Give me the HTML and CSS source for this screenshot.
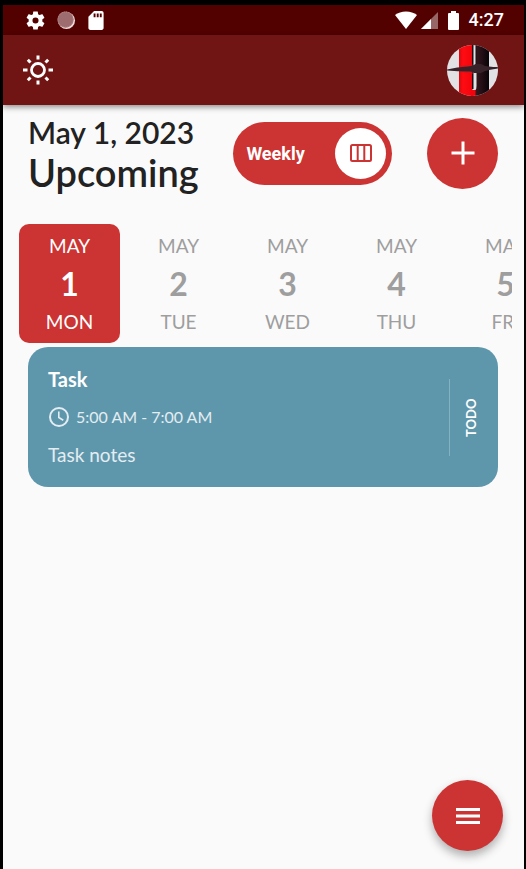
FILE: index.html
```html
<!DOCTYPE html>
<html lang="en">
<head>
<meta charset="utf-8">
<meta name="viewport" content="width=device-width, initial-scale=1">
<title>Upcoming</title>
<link rel="stylesheet" href="styles.css">
</head>
<body>
<div class="screen">
  <div class="status">
    <div class="status-group">
      <svg class="gear" viewBox="2 2 20 20" aria-hidden="true"><path fill="#fff" d="M19.14 12.94c.04-.3.06-.61.06-.94s-.02-.64-.07-.94l2.03-1.58c.18-.14.23-.41.12-.61l-1.92-3.32c-.12-.22-.37-.29-.59-.22l-2.39.96c-.5-.38-1.03-.7-1.62-.94l-.36-2.54c-.04-.24-.24-.41-.48-.41h-3.84c-.24 0-.43.17-.47.41l-.36 2.54c-.59.24-1.13.57-1.62.94l-2.39-.96c-.22-.08-.47 0-.59.22L2.74 8.87c-.12.21-.08.47.12.61l2.03 1.58c-.05.3-.09.63-.09.94s.02.64.07.94l-2.03 1.58c-.18.14-.23.41-.12.61l1.92 3.32c.12.22.37.29.59.22l2.39-.96c.5.38 1.03.7 1.62.94l.36 2.54c.05.24.24.41.48.41h3.84c.24 0 .44-.17.47-.41l.36-2.54c.59-.24 1.13-.56 1.62-.94l2.39.96c.22.08.47 0 .59-.22l1.92-3.32c.12-.22.07-.47-.12-.61l-2.01-1.58zM12 15.2a3.2 3.2 0 1 1 0-6.4 3.2 3.2 0 0 1 0 6.4z"/></svg>
      <svg class="dot" viewBox="0 0 20 20" aria-hidden="true"><circle cx="10" cy="10" r="9" fill="#eedcdc"/><circle cx="9" cy="9" r="8.500" fill="#9c6c6e"/><circle cx="9" cy="9" r="8" fill="none" stroke="#b98f90" stroke-width="1" stroke-dasharray="1 1"/></svg>
      <svg class="sd" viewBox="4 2 16 20" aria-hidden="true"><path fill="#fff" fill-rule="evenodd" d="M18 2h-8L4 8v12c0 1.100.9 2 2 2h12c1.100 0 2-.9 2-2V4c0-1.100-.9-2-2-2zM9.500 4.500v4h2v-4zm3.300 0v4h2v-4zm3.200 0v4h2v-4z"/></svg>
    </div>
    <div class="status-group right">
      <svg class="wifi" viewBox="0 0 22 18" aria-hidden="true"><path fill="#fff" d="M11 18 0 4Q4.500.5 11 .5T22 4z"/></svg>
      <svg class="signal" viewBox="0 0 17 17" aria-hidden="true"><path fill="#fff" opacity=".4" d="M0 17 17 0v17z"/><path fill="#fff" d="M0 17 10 7v10z"/></svg>
      <svg class="battery" viewBox="0 0 11 19" aria-hidden="true"><path fill="#fff" d="M3 2V0h5v2h2q1 0 1 1v15q0 1-1 1H1q-1 0-1-1V3q0-1 1-1z"/></svg>
      <span>4:27</span>
    </div>
  </div>

  <header class="appbar">
    <button class="theme" type="button" aria-label="Toggle theme">
      <svg viewBox="0 0 30 30" fill="none" stroke="#fff" aria-hidden="true"><circle cx="15" cy="15" r="6.500" stroke-width="2.800"/><path stroke-width="3" d="M15 .5v4M15 25.500v4M0 15h4.500M25.500 15H30M4.800 4.800l2.700 2.700M22.500 22.500l2.700 2.700M25.200 4.800l-2.700 2.700M7.500 22.500l-2.700 2.700"/></svg>
    </button>
    <a class="avatar" href="#profile" aria-label="Profile">
      <svg viewBox="0 0 51 51" aria-hidden="true">
        <defs><clipPath id="round"><circle cx="25.500" cy="25.500" r="25.500"/></clipPath>
        <linearGradient id="red"><stop offset="0" stop-color="#d80a10"/><stop offset=".3" stop-color="#ff0c12"/><stop offset="1" stop-color="#f2040c"/></linearGradient>
        <linearGradient id="dark"><stop offset="0" stop-color="#38181f"/><stop offset=".6" stop-color="#1c0c12"/><stop offset="1" stop-color="#080407"/></linearGradient></defs>
        <g clip-path="url(#round)">
          <path fill="#e2e2e4" d="M0 0h51v51H0z"/>
          <path fill="url(#red)" d="M12 0h13.500v51H12z"/>
          <path fill="#f2040c" d="M24 45h5v6h-5z"/>
          <path fill="#181014" d="M25 0h1.500v21H25zM28.500 0h1.500v21h-1.500zM25 26h1.500v18H25z"/>
          <path fill="url(#dark)" d="M29.500 0H42v51H28.500v-6q1-1 1-4z"/>
          <path fill="#e01018" d="M12 21.500q7-2 13.500-2v9.500q-7-1-13.500-3z"/>
          <path fill="#38222a" d="M0 24.500Q10 22 21 21.500q5-.5 7.500-2.500H34q4 2.500 8 2.500 4 .5 9 .5v1.500q-5 .8-9 1.500-5 1-8 3h-7q-1-1.500-4-1.500Q10 26.500 0 25.500z"/>
        </g>
      </svg>
    </a>
  </header>

  <main>
    <section class="heading">
      <div>
        <p class="date">May 1, 2023</p>
        <h1>Upcoming</h1>
      </div>
      <button class="toggle" type="button" role="switch" aria-checked="true">
        <span>Weekly</span>
        <span class="knob">
          <svg viewBox="0 0 22 18" fill="none" stroke="#cc3333" stroke-width="2" aria-hidden="true"><rect x="1" y="1" width="20" height="16" rx="1.500"/><path d="M7.700 1v16M14.300 1v16"/></svg>
        </span>
      </button>
      <button class="round" type="button" aria-label="Add task">
        <svg viewBox="0 0 24 24" stroke="#fff" stroke-width="3" aria-hidden="true"><path d="M12 .5v23M.5 12h23"/></svg>
      </button>
    </section>

    <div class="days">
      <button class="day selected" type="button"><span>MAY</span><b>1</b><span>MON</span></button>
      <button class="day" type="button"><span>MAY</span><b>2</b><span>TUE</span></button>
      <button class="day" type="button"><span>MAY</span><b>3</b><span>WED</span></button>
      <button class="day" type="button"><span>MAY</span><b>4</b><span>THU</span></button>
      <button class="day" type="button"><span>MAY</span><b>5</b><span>FRI</span></button>
    </div>

    <article class="task">
      <div class="task-body">
        <h2>Task</h2>
        <p class="time">
          <svg viewBox="0 0 20 20" fill="none" stroke="#e4edf1" stroke-width="2" aria-hidden="true"><circle cx="10" cy="10" r="9"/><path stroke-width="1.600" d="M9.800 4.500v6l4.500 2.700"/></svg>
          5:00 AM - 7:00 AM
        </p>
        <p class="notes">Task notes</p>
      </div>
      <div class="state">TODO</div>
    </article>
  </main>

  <button class="round fab" type="button" aria-label="Open menu">
    <svg viewBox="0 0 24 24" stroke="#fff" stroke-width="2.800" aria-hidden="true"><path d="M0 5.500h24M0 12h24M0 18.500h24"/></svg>
  </button>
</div>
</body>
</html>
```
FILE: styles.css
```css
* {
  box-sizing: border-box;
}

body {
  margin: 0;
  padding: 5px 2px 0 3px;
  min-height: 100vh;
  display: flex;
  background: #000;
  font-family: Lato, "Liberation Sans", sans-serif;
}

h1, h2, p {
  margin: 0;
}

button {
  border: 0;
  padding: 0;
  background: none;
  color: inherit;
  font: inherit;
  cursor: pointer;
}

svg {
  display: block;
  flex: none;
}

.screen {
  flex: 1;
  min-width: 0;
  display: flex;
  flex-direction: column;
  background: #fafafa;
}

.status {
  height: 30px;
  padding: 0 20px 0 23px;
  display: flex;
  align-items: center;
  justify-content: space-between;
  background: #530000;
  color: #fff;
  font: 500 18px/30px Roboto, sans-serif;
}

.status-group {
  display: flex;
  align-items: center;
  gap: 12px;
}

.status-group.right {
  gap: 10px;
}

.gear { width: 19px; height: 19px; }
.dot { width: 19px; height: 19px; }
.sd { width: 16px; height: 19px; }
.wifi { width: 22px; height: 18px; }
.signal { width: 17px; height: 17px; margin-left: -6px; }
.battery { width: 11px; height: 19px; }

.appbar {
  height: 70px;
  padding: 0 26px 0 20px;
  display: flex;
  align-items: center;
  justify-content: space-between;
  background: #701414;
  box-shadow: 0 2px 6px rgba(0, 0, 0, .45);
}

.theme svg {
  width: 30px;
  height: 30px;
}

.avatar svg {
  width: 51px;
  height: 51px;
}

.heading {
  padding: 12px 26px 0 25px;
  display: flex;
  align-items: center;
  justify-content: space-between;
  color: #222;
}

.date {
  font-size: 30px;
  line-height: 30px;
  font-weight: 600;
}

h1 {
  font-size: 38px;
  line-height: 50px;
  font-weight: 600;
}

.toggle {
  width: 159px;
  height: 63px;
  margin-bottom: 8px;
  padding: 0 6px 0 13px;
  display: flex;
  align-items: center;
  justify-content: space-between;
  border-radius: 32px;
  background: #cc3333;
  color: #fff;
  font: 700 18px Roboto, sans-serif;
}

.knob {
  width: 51px;
  height: 51px;
  display: grid;
  place-items: center;
  border-radius: 50%;
  background: #fff;
}

.knob svg {
  width: 22px;
  height: 18px;
}

.round {
  width: 71px;
  height: 71px;
  display: grid;
  place-items: center;
  border-radius: 50%;
  background: #cc3333;
}

.heading .round {
  margin-bottom: 8px;
}

.round svg {
  width: 24px;
  height: 24px;
}

.days {
  margin: 27px 12px 0 16px;
  display: flex;
  gap: 8px;
  overflow: hidden;
}

.day {
  flex: none;
  width: 101px;
  height: 119px;
  padding: 10px 0 9px;
  display: flex;
  flex-direction: column;
  align-items: center;
  justify-content: space-between;
  border-radius: 10px;
  color: #9e9e9e;
  font-size: 19px;
  line-height: 24px;
}

.day b {
  font-size: 32px;
  line-height: 32px;
}

.day.selected {
  background: #cc3333;
  color: #fff;
}

.task {
  margin: 4px 26px 0 25px;
  padding: 20px;
  display: flex;
  align-items: center;
  border-radius: 20px;
  background: #5e97ac;
  color: #e4edf1;
}

.task-body {
  flex: 1;
  display: grid;
  gap: 14px;
}

h2 {
  color: #fff;
  font-size: 20px;
  line-height: 24px;
  font-weight: 700;
}

.time {
  display: flex;
  align-items: center;
  gap: 7px;
  font-size: 16px;
  line-height: 24px;
}

.time svg {
  width: 20px;
  height: 20px;
  margin-left: 1px;
}

.notes {
  font-size: 19px;
  line-height: 24px;
}

.state {
  height: 77px;
  padding-right: 14px;
  border-right: 1px solid #86b1c1;
  color: #fff;
  font-size: 13px;
  line-height: 14px;
  font-weight: 700;
  text-align: center;
  writing-mode: vertical-rl;
  transform: rotate(180deg);
}

.fab {
  position: fixed;
  right: 23px;
  bottom: 18px;
  box-shadow: 0 5px 10px rgba(0, 0, 0, .3);
}
```
